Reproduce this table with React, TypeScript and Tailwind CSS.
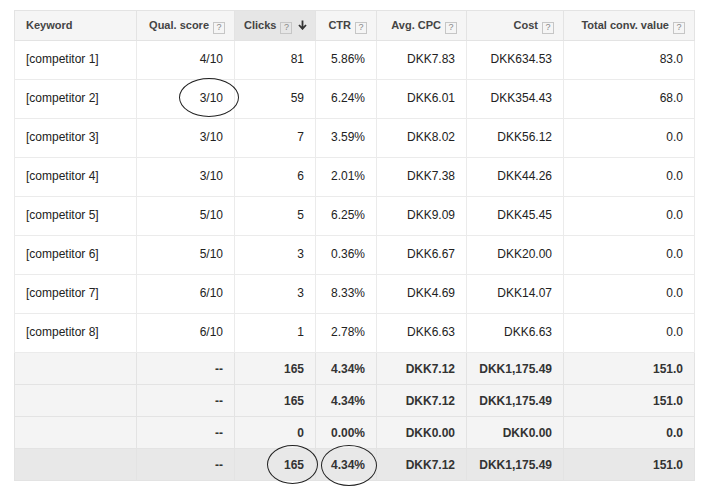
const rows = [
  { k: "[competitor 1]", q: "4/10", c: "81", ctr: "5.86%", cpc: "DKK7.83", cost: "DKK634.53", v: "83.0" },
  { k: "[competitor 2]", q: "3/10", c: "59", ctr: "6.24%", cpc: "DKK6.01", cost: "DKK354.43", v: "68.0" },
  { k: "[competitor 3]", q: "3/10", c: "7", ctr: "3.59%", cpc: "DKK8.02", cost: "DKK56.12", v: "0.0" },
  { k: "[competitor 4]", q: "3/10", c: "6", ctr: "2.01%", cpc: "DKK7.38", cost: "DKK44.26", v: "0.0" },
  { k: "[competitor 5]", q: "5/10", c: "5", ctr: "6.25%", cpc: "DKK9.09", cost: "DKK45.45", v: "0.0" },
  { k: "[competitor 6]", q: "5/10", c: "3", ctr: "0.36%", cpc: "DKK6.67", cost: "DKK20.00", v: "0.0" },
  { k: "[competitor 7]", q: "6/10", c: "3", ctr: "8.33%", cpc: "DKK4.69", cost: "DKK14.07", v: "0.0" },
  { k: "[competitor 8]", q: "6/10", c: "1", ctr: "2.78%", cpc: "DKK6.63", cost: "DKK6.63", v: "0.0" },
]

const totals = [
  { c: "165", ctr: "4.34%", cpc: "DKK7.12", cost: "DKK1,175.49", v: "151.0" },
  { c: "165", ctr: "4.34%", cpc: "DKK7.12", cost: "DKK1,175.49", v: "151.0" },
  { c: "0", ctr: "0.00%", cpc: "DKK0.00", cost: "DKK0.00", v: "0.0" },
  { c: "165", ctr: "4.34%", cpc: "DKK7.12", cost: "DKK1,175.49", v: "151.0" },
]

function Help() {
  return (
    <span className="ml-[4px] inline-flex h-[12px] w-[12px] items-center justify-center border border-[#c6c6c6] align-[-1px] text-[9px] font-normal leading-none text-[#888]">
      ?
    </span>
  )
}

function SortDown() {
  return (
    <svg width="9" height="10" viewBox="0 0 9 10" className="ml-[6px] inline-block align-[-1px]">
      <path d="M4.5 0.5v8M1 5l3.5 3.8L8 5" stroke="#333" strokeWidth="1.8" fill="none" />
    </svg>
  )
}

export default function App() {
  const cell = "border border-[#ebebeb] px-[11px] text-right"
  const th = "whitespace-nowrap border border-[#e3e3e3] px-[9px] text-right"
  return (
    <div className="relative h-[494px] w-[703px] bg-white font-['Liberation_Sans',Arial,sans-serif]">
      <div className="pl-[14px] pt-[10px]">
        <table className="w-[680px] table-fixed border-collapse border border-[#dcdcdc] text-[12px] text-[#222]">
          <colgroup>
            <col className="w-[122px]" />
            <col className="w-[98px]" />
            <col className="w-[81px]" />
            <col className="w-[61px]" />
            <col className="w-[90px]" />
            <col className="w-[97px]" />
            <col className="w-[131px]" />
          </colgroup>
          <thead>
            <tr className="h-[30px] bg-[#f5f5f5] text-[11px] font-bold text-[#444]">
              <th className="whitespace-nowrap border border-[#e3e3e3] px-[11px] text-left">Keyword</th>
              <th className={th}>Qual. score<Help /></th>
              <th className={`${th} bg-[#e6e6e6]`}>Clicks<Help /><SortDown /></th>
              <th className={th}>CTR<Help /></th>
              <th className={th}>Avg. CPC<Help /></th>
              <th className={th}>Cost<Help /></th>
              <th className={th}>Total conv. value<Help /></th>
            </tr>
          </thead>
          <tbody>
            {rows.map((r) => (
              <tr key={r.k} className="h-[39px]">
                <td className="border border-[#ebebeb] px-[11px] pb-[2px] text-left">{r.k}</td>
                <td className={`${cell} pb-[2px]`}>{r.q}</td>
                <td className={`${cell} pb-[2px]`}>{r.c}</td>
                <td className={`${cell} pb-[2px]`}>{r.ctr}</td>
                <td className={`${cell} pb-[2px]`}>{r.cpc}</td>
                <td className={`${cell} pb-[2px]`}>{r.cost}</td>
                <td className={`${cell} pb-[2px]`}>{r.v}</td>
              </tr>
            ))}
            {totals.map((t, i) => (
              <tr
                key={i}
                className={`h-[32px] font-bold text-[#333] ${i === 3 ? "bg-[#e8e8e8]" : "bg-[#f4f4f4]"}`}
              >
                <td className="border border-[#e3e3e3]"></td>
                <td className="border border-[#e3e3e3] px-[11px] text-right">--</td>
                <td className="border border-[#e3e3e3] px-[11px] text-right">{t.c}</td>
                <td className="border border-[#e3e3e3] px-[11px] text-right">{t.ctr}</td>
                <td className="border border-[#e3e3e3] px-[11px] text-right">{t.cpc}</td>
                <td className="border border-[#e3e3e3] px-[11px] text-right">{t.cost}</td>
                <td className="border border-[#e3e3e3] px-[11px] text-right">{t.v}</td>
              </tr>
            ))}
          </tbody>
        </table>
      </div>

      {/* hand-drawn circles */}
      <div className="absolute left-[179px] top-[78px] h-[39px] w-[60px] rounded-[50%] border border-[#222]" />
      <div className="absolute left-[267px] top-[445px] h-[39px] w-[51px] rounded-[50%] border border-[#222]" />
      <div className="absolute left-[321px] top-[445px] h-[41px] w-[56px] rounded-[50%] border border-[#222]" />
    </div>
  )
}
